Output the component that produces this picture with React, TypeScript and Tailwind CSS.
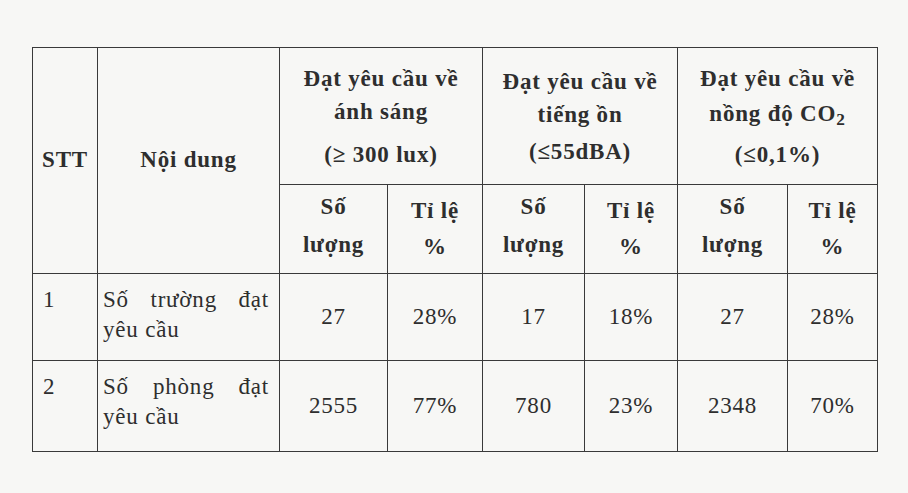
import React from "react";

const cell = "border border-[#3a3a3a]";

export default function App() {
  return (
    <div className="min-h-screen w-full bg-[#f7f7f5] pt-[47px] pl-[32px] font-['Liberation_Serif','Times_New_Roman',serif] text-[23px] tracking-[0.8px] text-[#2e2e2e]">
      <table className="table-fixed border-collapse w-[845px]">
        <colgroup>
          <col className="w-[65px]" />
          <col className="w-[182px]" />
          <col className="w-[108px]" />
          <col className="w-[95px]" />
          <col className="w-[102px]" />
          <col className="w-[93px]" />
          <col className="w-[110px]" />
          <col className="w-[90px]" />
        </colgroup>
        <tbody>
          <tr>
            <td rowSpan={2} className={`${cell} text-center align-middle font-bold`}>
              STT
            </td>
            <td rowSpan={2} className={`${cell} text-center align-middle font-bold`}>
              Nội dung
            </td>
            <td colSpan={2} className={`${cell} h-[137px] text-center align-middle font-bold`}>
              <div className="leading-[33px]">
                Đạt yêu cầu về
                <br />
                ánh sáng
              </div>
              <div className="mt-[10px] leading-[33px]">(≥ 300 lux)</div>
            </td>
            <td colSpan={2} className={`${cell} text-center align-middle font-bold`}>
              <div className="leading-[33px]">
                Đạt yêu cầu về
                <br />
                tiếng ồn
              </div>
              <div className="mt-[4px] leading-[33px]">(≤55dBA)</div>
            </td>
            <td colSpan={2} className={`${cell} text-center align-middle font-bold`}>
              <div className="leading-[35px]">
                Đạt yêu cầu về
                <br />
                nồng độ CO<sub>2</sub>
              </div>
              <div className="mt-[6px] leading-[35px]">(≤0,1%)</div>
            </td>
          </tr>
          <tr>
            {[0, 1, 2].map((i) => (
              <React.Fragment key={i}>
                <td className={`${cell} h-[89px] text-center align-middle font-bold leading-[38px] pb-[6px]`}>
                  Số
                  <br />
                  lượng
                </td>
                <td className={`${cell} text-center align-middle font-bold leading-[36px]`}>
                  Tỉ lệ
                  <br />
                  %
                </td>
              </React.Fragment>
            ))}
          </tr>
          {[
            { stt: "1", nd: "Số trường đạt yêu cầu", v: ["27", "28%", "17", "18%", "27", "28%"], h: "h-[87px]" },
            { stt: "2", nd: "Số phòng đạt yêu cầu", v: ["2555", "77%", "780", "23%", "2348", "70%"], h: "h-[91px]" },
          ].map((r) => (
            <tr key={r.stt}>
              <td className={`${cell} ${r.h} align-top pl-[10px] pt-[11px] leading-[30px]`}>{r.stt}</td>
              <td className={`${cell} align-top pl-[5px] pr-[10px] pt-[11px] leading-[30px] text-justify`}>
                {r.nd}
              </td>
              {r.v.map((x, i) => (
                <td key={i} className={`${cell} text-center align-middle`}>
                  {x}
                </td>
              ))}
            </tr>
          ))}
        </tbody>
      </table>
    </div>
  );
}
